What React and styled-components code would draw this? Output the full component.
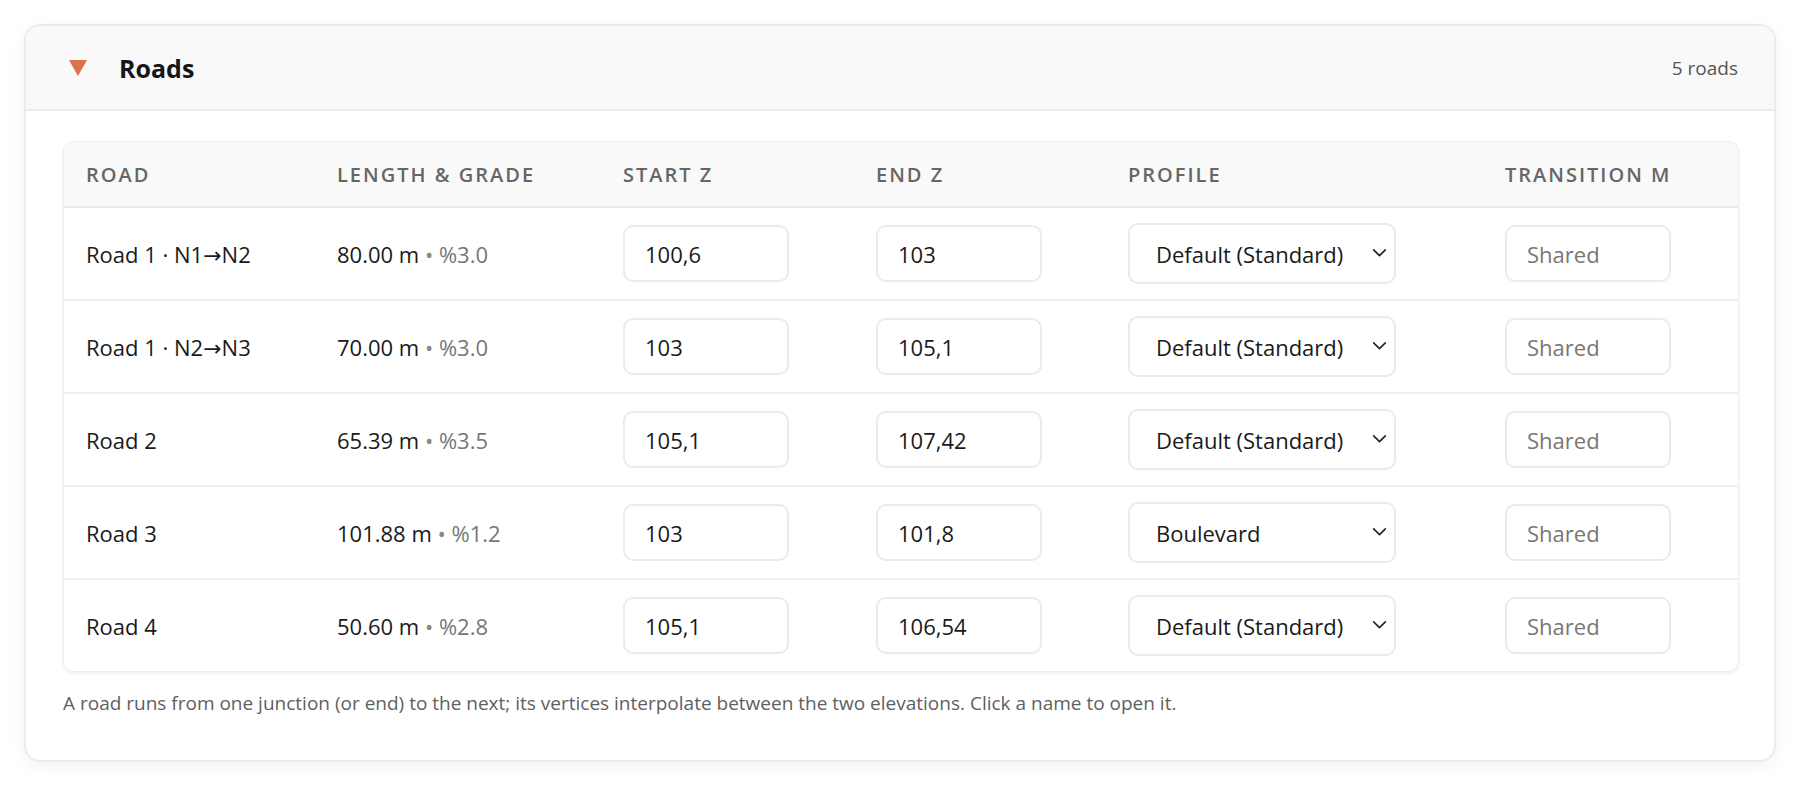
import React from "react";
import styled, { createGlobalStyle } from "styled-components";

const GlobalStyle = createGlobalStyle`
  html, body {
    margin: 0;
    background: #ffffff;
  }
  body {
    font-family: "Open Sans", "Noto Sans", "DejaVu Sans", sans-serif;
    color: #1a1a1a;
  }
`;

const Page = styled.div`
  padding: 24px;
`;

const Card = styled.section`
  border: 2px solid #ececec;
  border-radius: 16px;
  background: #ffffff;
  box-shadow: 0 4px 18px rgba(0, 0, 0, 0.05);
  overflow: hidden;
`;

const Header = styled.header`
  display: flex;
  align-items: center;
  height: 83px;
  padding: 0 36px 0 43px;
  background: #f9f9f9;
  border-bottom: 2px solid #ebebeb;
`;

const Caret = styled.svg`
  width: 18px;
  height: 16px;
  flex: none;
  margin-right: 32px;
`;

const Title = styled.h2`
  margin: 0;
  font-size: 25px;
  font-weight: 700;
  color: #161616;
  flex: 1;
`;

const Count = styled.span`
  font-size: 19px;
  color: #555555;
`;

const Body = styled.div`
  padding: 30px 37px 44px;
`;

const Table = styled.table`
  width: 100%;
  table-layout: fixed;
  border-collapse: separate;
  border-spacing: 0;
  border: 1px solid #ececec;
  border-radius: 10px;
  box-shadow: 0 2px 3px rgba(0, 0, 0, 0.06);
  overflow: hidden;
`;

const Th = styled.th`
  height: 64px;
  padding: 0 22px;
  text-align: left;
  background: #f9f9f9;
  border-bottom: 2px solid #ececec;
  font-size: 20px;
  font-weight: 600;
  letter-spacing: 0.1em;
  text-transform: uppercase;
  color: #666666;
  white-space: nowrap;
`;

const Td = styled.td`
  padding: 15px 22px;
  font-size: 22px;
  color: #1a1a1a;
  white-space: nowrap;
  border-bottom: ${({ $last }) => ($last ? "none" : "2px solid #efefef")};
`;

const Grade = styled.span`
  color: #777777;
`;

const Dot = styled.span`
  color: #888888;
`;

const Field = styled.input`
  box-sizing: border-box;
  width: 166px;
  height: 57px;
  padding: 0 20px;
  border: 2px solid #ebebeb;
  border-radius: 10px;
  background: #ffffff;
  font-family: inherit;
  font-size: 22px;
  color: #1a1a1a;
  outline: none;

  &::placeholder {
    color: #777777;
  }
`;

const SelectWrap = styled.div`
  position: relative;
  width: 268px;
`;

const Select = styled.select`
  box-sizing: border-box;
  width: 100%;
  height: 61px;
  padding: 0 40px 0 26px;
  border: 2px solid #ebebeb;
  border-radius: 10px;
  background: #ffffff;
  font-family: inherit;
  font-size: 22px;
  color: #1a1a1a;
  appearance: none;
  outline: none;
`;

const Chevron = styled.svg`
  position: absolute;
  right: 8px;
  top: 50%;
  width: 17px;
  height: 17px;
  margin-top: -10px;
  pointer-events: none;
`;

const Note = styled.p`
  margin: 18px 0 0;
  font-size: 19px;
  color: #5f5f5f;
`;

const profiles = ["Default (Standard)", "Boulevard"];

const roads = [
  { name: "Road 1 · N1→N2", length: "80.00 m", grade: "%3.0", start: "100,6", end: "103", profile: "Default (Standard)" },
  { name: "Road 1 · N2→N3", length: "70.00 m", grade: "%3.0", start: "103", end: "105,1", profile: "Default (Standard)" },
  { name: "Road 2", length: "65.39 m", grade: "%3.5", start: "105,1", end: "107,42", profile: "Default (Standard)" },
  { name: "Road 3", length: "101.88 m", grade: "%1.2", start: "103", end: "101,8", profile: "Boulevard" },
  { name: "Road 4", length: "50.60 m", grade: "%2.8", start: "105,1", end: "106,54", profile: "Default (Standard)" },
];

const columns = [
  { label: "Road", width: 251 },
  { label: "Length & Grade", width: 286 },
  { label: "Start Z", width: 253 },
  { label: "End Z", width: 252 },
  { label: "Profile", width: 377 },
  { label: "Transition m", width: 255 },
];

function ProfileSelect({ value }) {
  return (
    <SelectWrap>
      <Select defaultValue={value}>
        {profiles.map((p) => (
          <option key={p}>{p}</option>
        ))}
      </Select>
      <Chevron viewBox="0 0 16 16" fill="none">
        <path d="M2.5 5.5 L8 11 L13.5 5.5" stroke="#222" strokeWidth="1.5" strokeLinecap="round" strokeLinejoin="round" />
      </Chevron>
    </SelectWrap>
  );
}

export default function App() {
  return (
    <Page>
      <GlobalStyle />
      <Card>
        <Header>
          <Caret viewBox="0 0 18 16">
            <path d="M0 0 H18 L9 16 Z" fill="#d9734f" />
          </Caret>
          <Title>Roads</Title>
          <Count>{roads.length} roads</Count>
        </Header>
        <Body>
          <Table>
            <colgroup>
              {columns.map((c) => (
                <col key={c.label} style={{ width: c.width }} />
              ))}
            </colgroup>
            <thead>
              <tr>
                {columns.map((c) => (
                  <Th key={c.label}>{c.label}</Th>
                ))}
              </tr>
            </thead>
            <tbody>
              {roads.map((r, i) => {
                const last = i === roads.length - 1;
                return (
                  <tr key={r.name}>
                    <Td $last={last}>{r.name}</Td>
                    <Td $last={last}>
                      {r.length} <Dot>•</Dot> <Grade>{r.grade}</Grade>
                    </Td>
                    <Td $last={last}>
                      <Field defaultValue={r.start} />
                    </Td>
                    <Td $last={last}>
                      <Field defaultValue={r.end} />
                    </Td>
                    <Td $last={last}>
                      <ProfileSelect value={r.profile} />
                    </Td>
                    <Td $last={last}>
                      <Field placeholder="Shared" />
                    </Td>
                  </tr>
                );
              })}
            </tbody>
          </Table>
          <Note>
            A road runs from one junction (or end) to the next; its vertices interpolate between the two
            elevations. Click a name to open it.
          </Note>
        </Body>
      </Card>
    </Page>
  );
}
